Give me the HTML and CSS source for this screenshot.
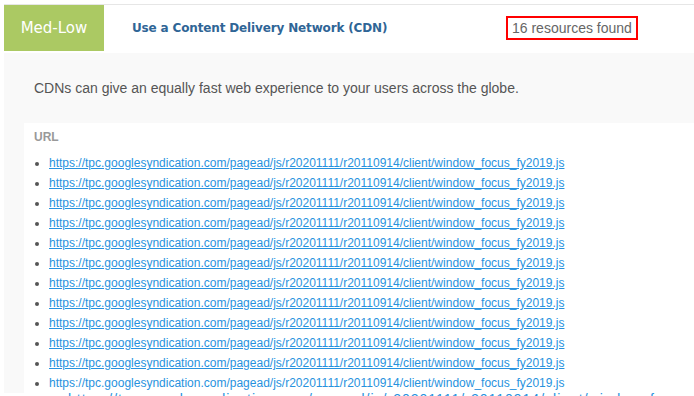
FILE: index.html
```html
<!DOCTYPE html>
<html lang="en">

<head>
  <meta charset="UTF-8" />
  <title>CDN audit</title>
  <link rel="stylesheet" href="styles.css">
</head>

<body>
  <div class="card">
    <div class="head">
      <div class="badge">Med-Low</div>
      <div class="title">Use a Content Delivery Network (CDN)</div>
      <div class="count">16 resources found</div>
    </div>
    <div class="panel">
      <p class="desc">CDNs can give an equally fast web experience to your users across the globe.</p>
      <div class="urls">
        <div class="label">URL</div>
        <ul class="list">
          <li><a href="#">https://tpc.googlesyndication.com/pagead/js/r20201111/r20110914/client/window_focus_fy2019.js</a></li>
          <li><a href="#">https://tpc.googlesyndication.com/pagead/js/r20201111/r20110914/client/window_focus_fy2019.js</a></li>
          <li><a href="#">https://tpc.googlesyndication.com/pagead/js/r20201111/r20110914/client/window_focus_fy2019.js</a></li>
          <li><a href="#">https://tpc.googlesyndication.com/pagead/js/r20201111/r20110914/client/window_focus_fy2019.js</a></li>
          <li><a href="#">https://tpc.googlesyndication.com/pagead/js/r20201111/r20110914/client/window_focus_fy2019.js</a></li>
          <li><a href="#">https://tpc.googlesyndication.com/pagead/js/r20201111/r20110914/client/window_focus_fy2019.js</a></li>
          <li><a href="#">https://tpc.googlesyndication.com/pagead/js/r20201111/r20110914/client/window_focus_fy2019.js</a></li>
          <li><a href="#">https://tpc.googlesyndication.com/pagead/js/r20201111/r20110914/client/window_focus_fy2019.js</a></li>
          <li><a href="#">https://tpc.googlesyndication.com/pagead/js/r20201111/r20110914/client/window_focus_fy2019.js</a></li>
          <li><a href="#">https://tpc.googlesyndication.com/pagead/js/r20201111/r20110914/client/window_focus_fy2019.js</a></li>
          <li><a href="#">https://tpc.googlesyndication.com/pagead/js/r20201111/r20110914/client/window_focus_fy2019.js</a></li>
          <li class="plain"><a href="#">https://tpc.googlesyndication.com/pagead/js/r20201111/r20110914/client/window_focus_fy2019.js</a></li>
        </ul>
      </div>
    </div>
  </div>
  <div class="ghost">https://tpc.googlesyndication.com/pagead/js/r20201111/r20110914/client/window_focus_fy2019.js</div>
</body>

</html>
```

FILE: styles.css
```css
body {
  margin: 0;
  background-color: #fff;
  font-family: "Liberation Sans", Arial, sans-serif;
  height: 396px;
  overflow: hidden;
}

.card {
  margin: 4px 0 0 4px;
  border-top: 1px solid #e6e6e6;
}

.head {
  display: flex;
  align-items: center;
  height: 46px;
}

.badge {
  width: 100px;
  height: 46px;
  background-color: #abc963;
  color: #fff;
  font-family: "DejaVu Sans", Verdana, sans-serif;
  font-size: 15px;
  display: flex;
  align-items: center;
  justify-content: center;
}

.title {
  width: 374px;
  padding-left: 28px;
  box-sizing: border-box;
  color: #2f6596;
  font-family: "DejaVu Sans", Verdana, sans-serif;
  font-weight: bold;
  font-size: 12px;
  letter-spacing: -0.15px;
}

.count {
  margin-left: 28px;
  border: 2px solid #f00;
  height: 20px;
  padding: 0 4px;
  line-height: 20px;
  color: #666;
  font-size: 14px;
}

.panel {
  margin-top: 2px;
  background-color: #f9f9f9;
  padding: 0 0 0 20px;
}

.desc {
  margin: 0;
  padding: 27px 10px 26px;
  color: #555;
  font-size: 14px;
  line-height: 17px;
}

.urls {
  background-color: #fff;
  padding: 7px 10px 0;
}

.label {
  color: #999;
  font-weight: bold;
  font-size: 12px;
  line-height: 14px;
}

.list {
  margin: 9px 0 0;
  padding-left: 15px;
  font-size: 12px;
  line-height: 20px;
  color: #555;
}

.list a {
  color: #2792de;
}

.list .plain a {
  text-decoration: none;
}

.ghost {
  margin: -2px 0 0 68px;
  white-space: nowrap;
  color: #2792de;
  font-size: 14px;
  letter-spacing: 1px;
}
```
